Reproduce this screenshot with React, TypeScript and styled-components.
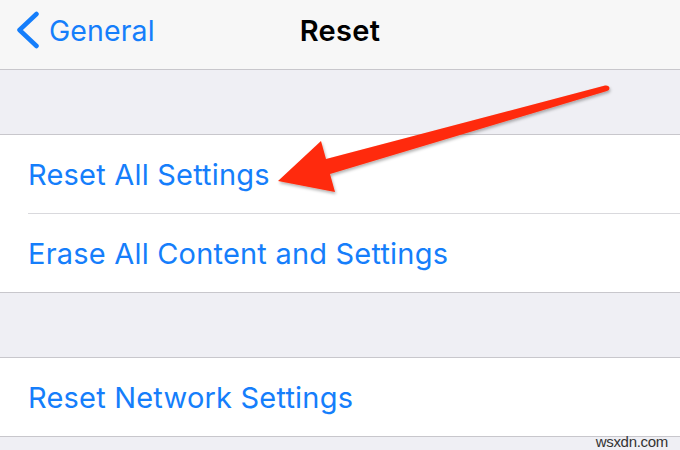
import React from "react";
import styled, { createGlobalStyle } from "styled-components";

const Global = createGlobalStyle`
  html, body { margin: 0; padding: 0; background: #efeff4; }
  body { font-family: Inter, "Liberation Sans", sans-serif; overflow: hidden; }
`;

const Screen = styled.div`
  position: relative;
  width: 680px;
  height: 450px;
  background: #efeff4;
  display: flex;
  flex-direction: column;
  overflow: hidden;
`;

const NavBar = styled.div`
  height: 70px;
  background: #f7f7f7;
  border-bottom: 1px solid #c8c7cc;
  display: grid;
  grid-template-columns: 1fr auto 1fr;
  align-items: center;
  padding: 0 16px 9px;
  box-sizing: border-box;
`;

const BackButton = styled.div`
  display: flex;
  align-items: center;
  gap: 9px;
  color: #157efb;
  font-size: 28.5px;
  letter-spacing: 0.1px;
`;

const Title = styled.div`
  font-size: 29px;
  font-weight: 600;
  color: #000;
  letter-spacing: 0.3px;
`;

const Gap = styled.div<{ $h: number }>`
  height: ${(p) => p.$h}px;
  flex-shrink: 0;
`;

const Group = styled.div`
  background: #fff;
  border-top: 1px solid #c8c7cc;
  border-bottom: 1px solid #c8c7cc;
  display: flex;
  flex-direction: column;
`;

const Row = styled.div<{ $divider?: boolean }>`
  height: 78px;
  margin-left: 28px;
  display: flex;
  align-items: center;
  color: #157efb;
  font-size: 29px;
  letter-spacing: 0.2px;
  border-bottom: ${(p) => (p.$divider ? "1px solid #d9d9dd" : "none")};
`;

const Overlay = styled.svg`
  position: absolute;
  left: 0;
  top: 0;
  pointer-events: none;
`;

const Watermark = styled.div`
  position: absolute;
  right: 12px;
  bottom: 0px;
  font-family: "Liberation Sans", Arial, sans-serif;
  font-size: 15px;
  color: #333;
  letter-spacing: -0.3px;
`;

export default function App() {
  return (
    <>
      <Global />
      <Screen>
        <NavBar>
          <BackButton>
            <svg width="24" height="38" viewBox="0 0 24 38">
              <path
                d="M20.5 3 L3.5 19 L20.5 35"
                fill="none"
                stroke="#157efb"
                strokeWidth="4.5"
                strokeLinecap="round"
                strokeLinejoin="round"
              />
            </svg>
            General
          </BackButton>
          <Title>Reset</Title>
          <div />
        </NavBar>
        <Gap $h={64} />
        <Group>
          <Row $divider>Reset All Settings</Row>
          <Row>Erase All Content and Settings</Row>
        </Group>
        <Gap $h={64} />
        <Group>
          <Row>Reset Network Settings</Row>
        </Group>
        <Overlay width="680" height="450" viewBox="0 0 680 450">
          <defs>
            <filter id="sh" x="-10%" y="-20%" width="120%" height="140%">
              <feDropShadow dx="1" dy="2" stdDeviation="1.5" floodColor="#000" floodOpacity="0.3" />
            </filter>
          </defs>
          <path
            d="M278 181 L321 141 L326 159 L605 85.5 Q609 85 609.5 88 Q609.5 90.5 607 91 L330 174 L335 192 Z"
            fill="#ff2a0a"
            filter="url(#sh)"
            strokeLinejoin="round"
          />
        </Overlay>
        <Watermark>wsxdn.com</Watermark>
      </Screen>
    </>
  );
}
